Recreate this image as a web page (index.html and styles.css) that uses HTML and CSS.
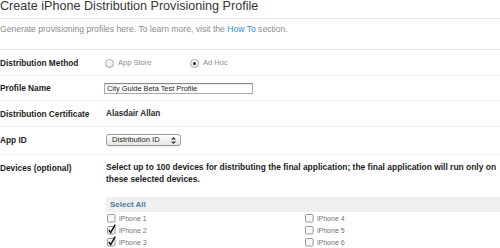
FILE: index.html
```html
<!DOCTYPE html>
<html lang="en">
<head>
  <meta charset="UTF-8">
  <title>Create iPhone Distribution Provisioning Profile</title>
  <link rel="stylesheet" href="styles.css">
</head>
<body>

  <div class="page">
    <h1 class="title">Create iPhone Distribution Provisioning Profile</h1>
    <p class="intro">Generate provisioning profiles here. To learn more, visit the <a href="#">How To</a> section.</p>

    <div class="form">
      <div class="row">
        <div class="label">Distribution Method</div>
        <div class="field radios">
          <label class="radio"><span class="dot"></span>App Store</label>
          <label class="radio checked"><span class="dot"></span>Ad Hoc</label>
        </div>
      </div>

      <div class="row row-name">
        <div class="label">Profile Name</div>
        <div class="field">
          <div class="text-input">City Guide Beta Test Profile</div>
        </div>
      </div>

      <div class="row">
        <div class="label">Distribution Certificate</div>
        <div class="field cert">Alasdair Allan</div>
      </div>

      <div class="row row-app">
        <div class="label">App ID</div>
        <div class="field">
          <div class="select">
            <span>Distribution ID</span>
            <svg class="arrows" width="5" height="7" viewBox="0 0 5 7">
              <path d="M2.5 0 L5 2.6 L0 2.6 Z" fill="#333"/>
              <path d="M2.5 7 L5 4.4 L0 4.4 Z" fill="#333"/>
            </svg>
          </div>
        </div>
      </div>

      <div class="row row-devices">
        <div class="label">Devices (optional)</div>
        <div class="field">
          <p class="devices-note">Select up to 100 devices for distributing the final application; the final application will run only on these selected devices.</p>
          <div class="select-all"><a href="#">Select All</a></div>
          <div class="device-list">
            <label class="device">
              <svg class="cb" width="10" height="11" viewBox="0 0 10 11"><rect x="0.5" y="2.5" width="7.5" height="7.5" rx="1" fill="#fafafa" stroke="#9a9a9a"/></svg>
              iPhone 1
            </label>
            <label class="device">
              <svg class="cb" width="10" height="11" viewBox="0 0 10 11"><rect x="0.5" y="2.5" width="7.5" height="7.5" rx="1" fill="#fafafa" stroke="#9a9a9a"/></svg>
              iPhone 4
            </label>
            <label class="device">
              <svg class="cb" width="10" height="11" viewBox="0 0 10 11"><rect x="0.5" y="2.5" width="7.5" height="7.5" rx="1" fill="#fafafa" stroke="#9a9a9a"/><path d="M1.8 5.8 L3.7 8.6 L8.2 0.6" stroke="#111" stroke-width="1.5" fill="none"/></svg>
              iPhone 2
            </label>
            <label class="device">
              <svg class="cb" width="10" height="11" viewBox="0 0 10 11"><rect x="0.5" y="2.5" width="7.5" height="7.5" rx="1" fill="#fafafa" stroke="#9a9a9a"/></svg>
              iPhone 5
            </label>
            <label class="device">
              <svg class="cb" width="10" height="11" viewBox="0 0 10 11"><rect x="0.5" y="2.5" width="7.5" height="7.5" rx="1" fill="#fafafa" stroke="#9a9a9a"/><path d="M1.8 5.8 L3.7 8.6 L8.2 0.6" stroke="#111" stroke-width="1.5" fill="none"/></svg>
              iPhone 3
            </label>
            <label class="device">
              <svg class="cb" width="10" height="11" viewBox="0 0 10 11"><rect x="0.5" y="2.5" width="7.5" height="7.5" rx="1" fill="#fafafa" stroke="#9a9a9a"/></svg>
              iPhone 6
            </label>
          </div>
        </div>
      </div>
    </div>
  </div>

</body>
</html>
```

FILE: styles.css
```css
/* provisioning profile form */
body {
  margin: 0;
  font-family: "Liberation Sans", Arial, sans-serif;
  color: #222;
  background: #fff;
}

.page {
  width: 500px;
}

.title {
  margin: 0;
  padding-bottom: 6px;
  font-size: 12.6px;
  font-weight: normal;
  line-height: 12px;
  color: #363636;
  border-bottom: 1px solid #e8e8e8;
}

.intro {
  margin: 0;
  padding: 4px 0 14px;
  font-size: 8.6px;
  line-height: 12px;
  color: #8c8c8c;
  border-bottom: 1px solid #e9ebf1;
}

.intro a {
  color: #2d8fd9;
  text-decoration: none;
}

.row {
  display: grid;
  grid-template-columns: 106px 1fr;
  padding: 7px 0 6px;
  font-size: 8px;
  line-height: 12px;
  border-bottom: 1px solid #eceef4;
}

.row-name {
  padding-top: 6px;
}

.row-app {
  padding-bottom: 8px;
}

.row-devices {
  border-bottom: none;
}

.label {
  font-size: 8.3px;
  font-weight: bold;
  color: #1c1c1c;
}

.radios {
  display: flex;
  margin-left: -1px;
}

.radio {
  display: flex;
  align-items: center;
  gap: 4px;
  width: 85px;
  font-size: 7.5px;
  color: #8f8f8f;
}

.dot {
  position: relative;
  width: 7px;
  height: 7px;
  border: 1px solid #a8a8a8;
  border-radius: 50%;
  background: linear-gradient(#fff, #e6e6e6);
}

.radio.checked .dot::after {
  content: "";
  position: absolute;
  left: 2px;
  top: 2px;
  width: 3px;
  height: 3px;
  border-radius: 50%;
  background: #222;
}

.text-input {
  width: 143px;
  height: 9px;
  margin: 1px 0 0 -2px;
  padding: 0 2px;
  font-size: 7.4px;
  line-height: 9px;
  color: #1a1a1a;
  border: 1px solid #a9a9a9;
  border-top-color: #888;
  box-shadow: inset 0 1px 1px rgba(0, 0, 0, 0.08);
}

.cert {
  font-size: 8.2px;
  font-weight: bold;
  color: #2a2a2a;
}

.select {
  display: flex;
  align-items: center;
  justify-content: space-between;
  width: 64px;
  height: 10px;
  padding: 0 4px 0 5px;
  font-size: 7.6px;
  color: #1a1a1a;
  border: 1px solid #9d9d9d;
  border-radius: 3px;
  background: linear-gradient(#ffffff, #e4e4e4);
  box-shadow: 0 1px 0 rgba(0, 0, 0, 0.08);
}

.devices-note {
  margin: 0;
  font-size: 8.45px;
  font-weight: bold;
  line-height: 11.5px;
  color: #1c1c1c;
}

.select-all {
  margin-top: 12px;
  padding-left: 4px;
  height: 15px;
  font-size: 8px;
  line-height: 15px;
  background: #f0f0f0;
}

.select-all a {
  font-weight: bold;
  color: #4f7aa5;
  text-decoration: none;
}

.device-list {
  display: grid;
  grid-template-columns: 198px 1fr;
  padding: 1px 0 0 1px;
}

.device {
  display: flex;
  align-items: center;
  gap: 2px;
  height: 12px;
  font-size: 7px;
  color: #747474;
}

.cb {
  margin-top: -3px;
}
```
